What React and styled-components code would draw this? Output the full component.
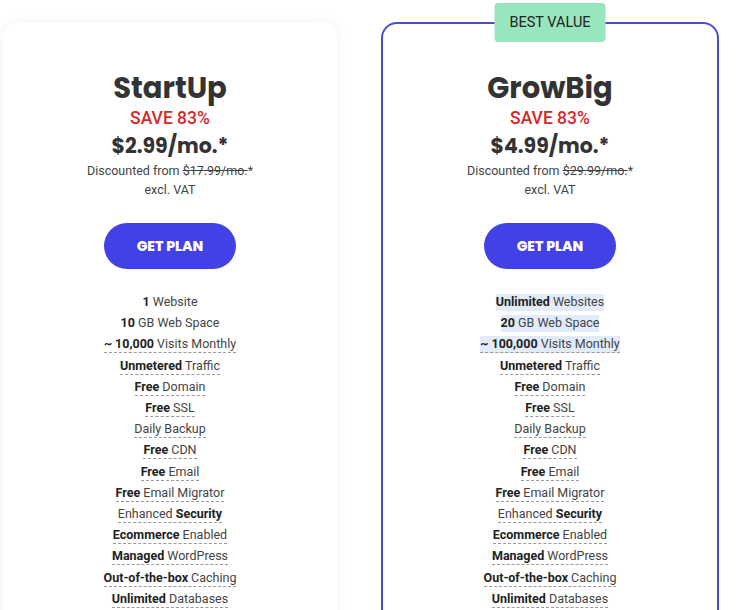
import React from "react";
import styled, { createGlobalStyle } from "styled-components";

const Global = createGlobalStyle`
  html, body { margin: 0; padding: 0; background: #fff; }
  body { font-family: Roboto, "Liberation Sans", sans-serif; color: #333; overflow: hidden; }
`;

const Page = styled.div`
  display: flex;
  align-items: flex-start;
  gap: 44px;
  padding: 22px 0 0 3px;
  height: 610px;
  box-sizing: border-box;
  overflow: hidden;
`;

const Card = styled.div`
  position: relative;
  box-sizing: border-box;
  width: ${(p) => (p.$featured ? "338px" : "334px")};
  min-height: 640px;
  background: #fff;
  border-radius: 16px;
  border: ${(p) => (p.$featured ? "2px solid #4b4bd3" : "none")};
  box-shadow: ${(p) => (p.$featured ? "none" : "0 0 14px rgba(0,0,0,0.06)")};
  padding-top: ${(p) => (p.$featured ? "46px" : "48px")};
  display: flex;
  flex-direction: column;
  align-items: center;
`;

const Badge = styled.div`
  position: absolute;
  top: -21px;
  left: 50%;
  transform: translateX(-50%);
  width: 111px;
  height: 39px;
  background: #98e6bd;
  border-radius: 4px;
  display: flex;
  align-items: center;
  justify-content: center;
  font-size: 14.5px;
  color: #222;
`;

const Title = styled.h2`
  margin: 0;
  font-family: Poppins, "Open Sans", sans-serif;
  font-weight: 700;
  font-size: 29px;
  line-height: 36px;
  color: #333;
`;

const Save = styled.div`
  font-size: 17.5px;
  font-weight: 500;
  color: #d32a2a;
  line-height: 20px;
  margin-top: 2px;
`;

const Price = styled.div`
  font-family: Poppins, "Open Sans", sans-serif;
  font-weight: 700;
  font-size: 20.5px;
  line-height: 30px;
  margin-top: 3px;
  color: #333;
`;

const Note = styled.div`
  font-size: 12.5px;
  line-height: 19px;
  color: #444;
`;

const Strike = styled.span`
  text-decoration: line-through;
`;

const Button = styled.button`
  margin-top: 24px;
  width: 132px;
  height: 46px;
  border: none;
  border-radius: 23px;
  background: #4141e6;
  color: #fff;
  font-family: Poppins, "Open Sans", sans-serif;
  font-weight: 800;
  font-size: 14px;
  cursor: pointer;
`;

const Features = styled.ul`
  list-style: none;
  margin: 23px 0 0;
  padding: 0;
  display: flex;
  flex-direction: column;
  align-items: center;
`;

const Item = styled.li`
  height: 21.2px;
  display: flex;
  align-items: center;
`;

const Label = styled.span`
  font-size: 12.5px;
  line-height: 16px;
  color: #444;
  background: ${(p) => (p.$hl ? "#e1ebf9" : "transparent")};
  border-bottom: 1px dashed ${(p) => (p.$dashed ? "#9a9a9a" : "transparent")};
  b { color: #222; font-weight: 700; }
`;

const plans = [
  {
    name: "StartUp",
    price: "$2.99/mo.*",
    old: "$17.99/mo.",
    features: [
      [<><b>1</b> Website</>, false, false],
      [<><b>10</b> GB Web Space</>, false, false],
      [<><b>~ 10,000</b> Visits Monthly</>, true, false],
    ],
  },
  {
    name: "GrowBig",
    featured: true,
    price: "$4.99/mo.*",
    old: "$29.99/mo.",
    features: [
      [<><b>Unlimited</b> Websites</>, false, true],
      [<><b>20</b> GB Web Space</>, false, true],
      [<><b>~ 100,000</b> Visits Monthly</>, true, true],
    ],
  },
];

const common = [
  <><b>Unmetered</b> Traffic</>,
  <><b>Free</b> Domain</>,
  <><b>Free</b> SSL</>,
  <>Daily Backup</>,
  <><b>Free</b> CDN</>,
  <><b>Free</b> Email</>,
  <><b>Free</b> Email Migrator</>,
  <>Enhanced <b>Security</b></>,
  <><b>Ecommerce</b> Enabled</>,
  <><b>Managed</b> WordPress</>,
  <><b>Out-of-the-box</b> Caching</>,
  <><b>Unlimited</b> Databases</>,
];

export default function App() {
  return (
    <>
      <Global />
      <Page>
        {plans.map((p) => (
          <Card key={p.name} $featured={p.featured}>
            {p.featured && <Badge>BEST VALUE</Badge>}
            <Title>{p.name}</Title>
            <Save>SAVE 83%</Save>
            <Price>{p.price}</Price>
            <Note>
              Discounted from <Strike>{p.old}</Strike>*
            </Note>
            <Note>excl. VAT</Note>
            <Button>GET PLAN</Button>
            <Features>
              {p.features.map(([c, d, h], i) => (
                <Item key={i}>
                  <Label $dashed={d} $hl={h}>{c}</Label>
                </Item>
              ))}
              {common.map((c, i) => (
                <Item key={"c" + i}>
                  <Label $dashed>{c}</Label>
                </Item>
              ))}
            </Features>
          </Card>
        ))}
      </Page>
    </>
  );
}
